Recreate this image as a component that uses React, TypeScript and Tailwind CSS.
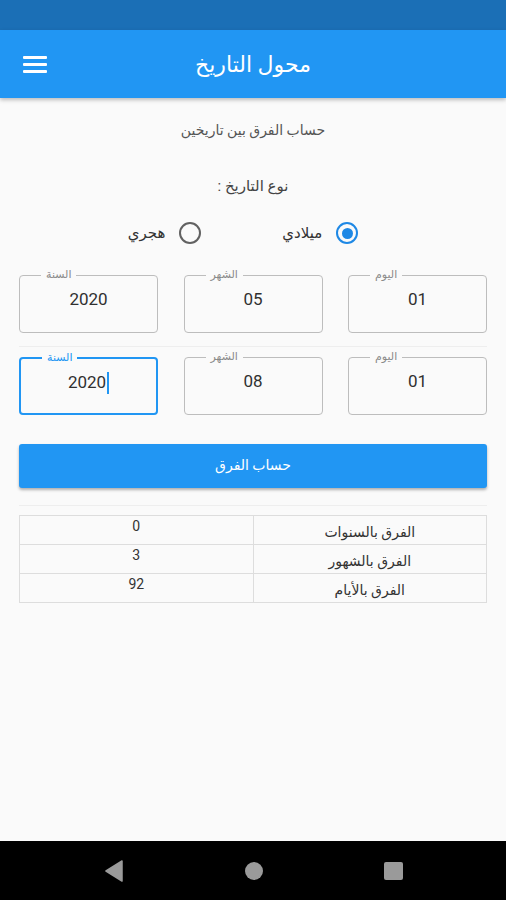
import { useState } from "react";

const font = { fontFamily: "Roboto, 'DejaVu Sans', sans-serif" };

function DateField({
  label,
  value,
  focused,
}: {
  label: string;
  value: string;
  focused?: boolean;
}) {
  return (
    <div
      className={`relative h-[58px] w-[139px] rounded-[4px] ${
        focused ? "border-2 border-[#2196f3]" : "border border-[#bdbdbd]"
      }`}
    >
      <span
        className={`absolute -top-[8px] left-[21px] bg-[#fafafa] px-[5px] text-[11px] leading-[14px] ${
          focused ? "text-[#2196f3]" : "text-[#8a8a8a]"
        }`}
      >
        {label}
      </span>
      <div className="flex h-full items-start justify-center pt-[11px] text-[17px] text-[#303030]">
        <span>{value}</span>
        {focused && <span className="mt-[2px] ml-[1px] h-[22px] w-[2px] bg-[#2196f3]" />}
      </div>
    </div>
  );
}

function Radio({ checked, label }: { checked: boolean; label: string }) {
  return (
    <div className="flex items-center gap-[14px]">
      <div
        className={`flex h-[22px] w-[22px] items-center justify-center rounded-full border-2 ${
          checked ? "border-[#1e88e5]" : "border-[#616161]"
        }`}
      >
        {checked && <div className="h-[11px] w-[11px] rounded-full bg-[#1e88e5]" />}
      </div>
      <span className="text-[15px] text-[#333]">{label}</span>
    </div>
  );
}

export default function App() {
  const [type] = useState("greg");
  const rows = [
    ["الفرق بالسنوات", "0"],
    ["الفرق بالشهور", "3"],
    ["الفرق بالأيام", "92"],
  ];

  return (
    <div className="flex h-[900px] w-[506px] flex-col bg-[#fafafa]" style={font}>
      {/* status bar */}
      <div className="h-[30px] bg-[#1b6fb6]" />

      {/* app bar */}
      <div className="relative z-10 flex h-[68px] items-center bg-[#2196f3] px-[23px] shadow-[0_2px_4px_rgba(0,0,0,0.25)]">
        <svg width="24" height="18" viewBox="0 0 24 18" className="shrink-0">
          <rect x="0" y="1" width="24" height="3" rx="1" fill="white" />
          <rect x="0" y="8" width="24" height="3" rx="1" fill="white" />
          <rect x="0" y="15" width="24" height="3" rx="1" fill="white" />
        </svg>
        <div className="flex-1 pr-[24px] text-center text-[22px] text-white" dir="rtl">
          محول التاريخ
        </div>
      </div>

      <div className="flex flex-1 flex-col" dir="rtl">
        <div className="pt-[20px] text-center text-[14px] leading-[24px] text-[#555]">
          حساب الفرق بين تاريخين
        </div>
        <div className="pt-[32px] text-center text-[15px] leading-[24px] text-[#444]">
          نوع التاريخ :
        </div>

        <div className="flex justify-center gap-[81px] pt-[24px] pr-[20px]">
          <Radio checked={type === "greg"} label="ميلادي" />
          <Radio checked={type === "hijri"} label="هجري" />
        </div>

        <div className="px-[19px] pt-[30px]" dir="ltr">
          <div className="flex justify-between">
            <DateField label="السنة" value="2020" />
            <DateField label="الشهر" value="05" />
            <DateField label="اليوم" value="01" />
          </div>
          <div className="mt-[13px] mb-[10px] h-px bg-[#eeeeee]" />
          <div className="flex justify-between">
            <DateField label="السنة" value="2020" focused />
            <DateField label="الشهر" value="08" />
            <DateField label="اليوم" value="01" />
          </div>

          <button
            className="mt-[29px] flex h-[44px] w-full items-center justify-center rounded-[3px] bg-[#2196f3] text-[14px] text-white shadow-[0_2px_3px_rgba(0,0,0,0.3)]"
            dir="rtl"
          >
            حساب الفرق
          </button>

          <div className="mt-[17px] mb-[9px] h-px bg-[#eeeeee]" />

          <table className="w-full border-collapse text-[14px] leading-[18px] text-[#333]" dir="rtl">
            <tbody>
              {rows.map(([label, value]) => (
                <tr key={label} className="h-[29px]">
                  <td className="w-1/2 border border-[#dddddd] pt-[4px] text-center align-middle">
                    {label}
                  </td>
                  <td className="w-1/2 border border-[#dddddd] pb-[8px] text-center align-middle">
                    {value}
                  </td>
                </tr>
              ))}
            </tbody>
          </table>
        </div>
      </div>

      {/* nav bar */}
      <div className="flex h-[59px] items-center justify-center gap-[121px] bg-black">
        <svg width="20" height="22" viewBox="0 0 20 22">
          <path d="M18 1 L2 11 L18 21 Z" fill="#9a9a9a" stroke="#9a9a9a" strokeWidth="1.5" strokeLinejoin="round" />
        </svg>
        <div className="h-[18px] w-[18px] rounded-full bg-[#9a9a9a]" />
        <div className="h-[18px] w-[19px] rounded-[2px] bg-[#9a9a9a]" />
      </div>
    </div>
  );
}
